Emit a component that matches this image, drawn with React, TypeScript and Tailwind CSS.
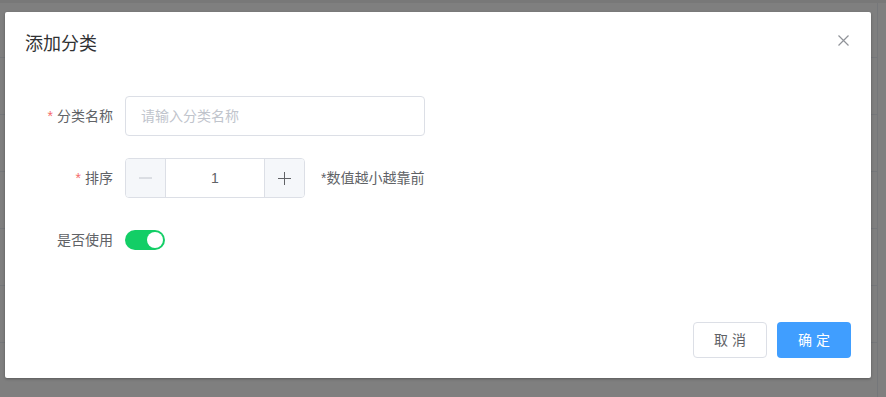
import { useState } from "react";

const font = { fontFamily: '"Liberation Sans", "Noto Sans CJK SC", sans-serif' };

function PageBehind() {
  return (
    <div className="w-full h-full bg-white">
      <div className="h-[3px] bg-[#f0f0f0]" />
      <div className="flex">
        <div className="flex-1">
          {Array.from({ length: 7 }).map((_, i) => (
            <div key={i} className={i === 0 ? "h-[55px] border-b border-[#ebeef5]" : "h-[57px] border-b border-[#ebeef5]"} />
          ))}
        </div>
        <div className="w-[9px] border-l border-[#ebeef5]" />
      </div>
    </div>
  );
}

function Dialog() {
  const [on, setOn] = useState(true);
  const [n, setN] = useState(1);
  return (
    <div className="w-[866px] bg-white rounded-[2px] shadow-[0_1px_3px_rgba(0,0,0,0.3)] flex flex-col">
      <div className="pt-5 px-5 pb-[10px] flex items-start justify-between">
        <span className="text-[18px] leading-6 text-[#303133]">添加分类</span>
        <button className="w-4 h-4 flex items-center justify-center text-[#909399]">
          <svg width="11" height="11" viewBox="0 0 11 11" fill="none" stroke="currentColor" strokeWidth="1.2">
            <path d="M0.5 0.5 L10.5 10.5 M10.5 0.5 L0.5 10.5" />
          </svg>
        </button>
      </div>
      <div className="py-[30px] px-5 flex flex-col">
        <div className="flex items-center h-10 mb-[22px]">
          <label className="w-[100px] pr-3 text-right text-sm text-[#606266]">
            <span className="text-[#f56c6c] mr-1">*</span>分类名称
          </label>
          <div className="w-[300px] h-10 border border-[#dcdfe6] rounded flex items-center px-[15px] text-sm text-[#c0c4cc]">
            请输入分类名称
          </div>
        </div>
        <div className="flex items-center h-10 mb-[22px]">
          <label className="w-[100px] pr-3 text-right text-sm text-[#606266]">
            <span className="text-[#f56c6c] mr-1">*</span>排序
          </label>
          <div className="w-[180px] h-10 border border-[#dcdfe6] rounded flex overflow-hidden">
            <button onClick={() => setN(n - 1)} className="w-10 h-full bg-[#f5f7fa] border-r border-[#dcdfe6] flex items-center justify-center text-[#606266]">
              <svg width="13" height="2" viewBox="0 0 13 2"><path d="M0 1 H13" stroke="#c0c4cc" strokeWidth="1" /></svg>
            </button>
            <div className="flex-1 flex items-center justify-center text-sm text-[#606266]">{n}</div>
            <button onClick={() => setN(n + 1)} className="w-10 h-full bg-[#f5f7fa] border-l border-[#dcdfe6] flex items-center justify-center">
              <svg width="13" height="13" viewBox="0 0 13 13"><path d="M0 6.5 H13 M6.5 0 V13" stroke="#606266" strokeWidth="1" /></svg>
            </button>
          </div>
          <span className="ml-4 text-sm text-[#606266]">*数值越小越靠前</span>
        </div>
        <div className="flex items-center h-10 mb-[22px]">
          <label className="w-[100px] pr-3 text-right text-sm text-[#606266]">是否使用</label>
          <button
            onClick={() => setOn(!on)}
            className={on ? "w-10 h-5 rounded-full bg-[#13ce66] flex items-center justify-end px-[2px]" : "w-10 h-5 rounded-full bg-[#dcdfe6] flex items-center justify-start px-[2px]"}
          >
            <span className="w-4 h-4 rounded-full bg-white block" />
          </button>
        </div>
      </div>
      <div className="pt-[10px] px-5 pb-5 flex justify-end gap-[10px]">
        <button className="w-[74px] h-9 border border-[#dcdfe6] rounded text-sm text-[#606266] bg-white">取 消</button>
        <button className="w-[74px] h-9 rounded text-sm text-white bg-[#409eff]">确 定</button>
      </div>
    </div>
  );
}

export default function App() {
  return (
    <div className="relative w-[886px] h-[397px] overflow-hidden" style={font}>
      <PageBehind />
      <div className="absolute inset-0 bg-black/50 pt-3 pl-[5px]">
        <Dialog />
      </div>
    </div>
  );
}
